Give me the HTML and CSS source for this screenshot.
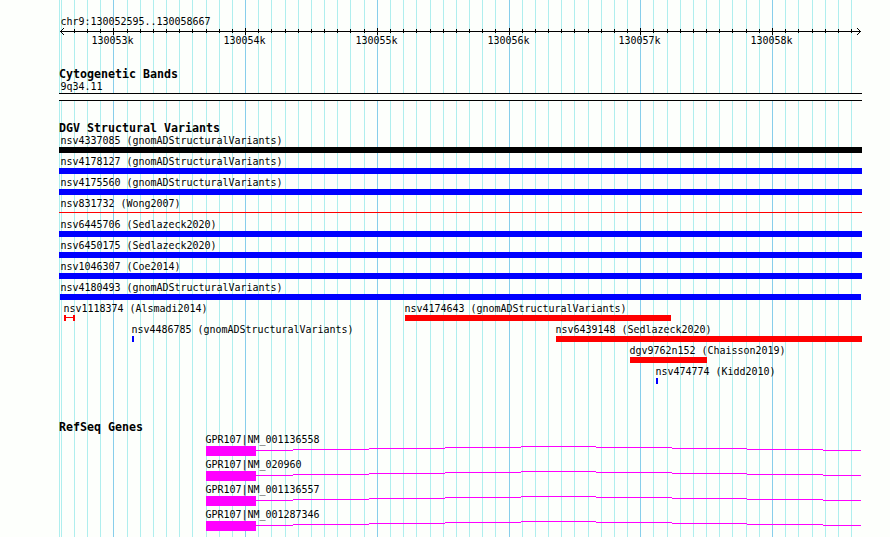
FILE: index.html
```
<!DOCTYPE html>
<html lang="en">
<head>
<meta charset="utf-8">
<title>chr9:130052595..130058667</title>
<link rel="stylesheet" href="styles.css">
</head>
<body>
<main class="browser">
  <svg class="gridlines" width="890" height="537" shape-rendering="crispEdges" aria-hidden="true">
    <path class="minor" d="M59.5 0v537M61.5 0v537M74.5 0v537M87.5 0v537M100.5 0v537M127.5 0v537M140.5 0v537M153.5 0v537M166.5 0v537M179.5 0v537M192.5 0v537M206.5 0v537M219.5 0v537M232.5 0v537M258.5 0v537M271.5 0v537M285.5 0v537M298.5 0v537M311.5 0v537M324.5 0v537M337.5 0v537M350.5 0v537M364.5 0v537M390.5 0v537M403.5 0v537M416.5 0v537M430.5 0v537M443.5 0v537M456.5 0v537M469.5 0v537M482.5 0v537M495.5 0v537M522.5 0v537M535.5 0v537M548.5 0v537M561.5 0v537M574.5 0v537M588.5 0v537M601.5 0v537M614.5 0v537M627.5 0v537M653.5 0v537M667.5 0v537M680.5 0v537M693.5 0v537M706.5 0v537M719.5 0v537M732.5 0v537M746.5 0v537M759.5 0v537M785.5 0v537M798.5 0v537M812.5 0v537M825.5 0v537M838.5 0v537M851.5 0v537"/>
    <path class="major" d="M113.5 0v537M245.5 0v537M377.5 0v537M509.5 0v537M640.5 0v537M772.5 0v537"/>
  </svg>

  <div class="tracks">
    <header class="ruler">
      <div class="line"><span class="label" style="--x:1">chr9:130052595..130058667</span></div>
      <svg class="axis" width="803" height="7" viewBox="59 28 803 7" shape-rendering="crispEdges" aria-hidden="true">
        <path d="M60 31.5H861"/>
        <path d="M74.5 29v4M87.5 29v4M100.5 29v4M127.5 29v4M140.5 29v4M153.5 29v4M166.5 29v4M179.5 29v4M192.5 29v4M206.5 29v4M219.5 29v4M232.5 29v4M258.5 29v4M271.5 29v4M285.5 29v4M298.5 29v4M311.5 29v4M324.5 29v4M337.5 29v4M350.5 29v4M364.5 29v4M390.5 29v4M403.5 29v4M416.5 29v4M430.5 29v4M443.5 29v4M456.5 29v4M469.5 29v4M482.5 29v4M495.5 29v4M522.5 29v4M535.5 29v4M548.5 29v4M561.5 29v4M574.5 29v4M588.5 29v4M601.5 29v4M614.5 29v4M627.5 29v4M653.5 29v4M667.5 29v4M680.5 29v4M693.5 29v4M706.5 29v4M719.5 29v4M732.5 29v4M746.5 29v4M759.5 29v4M785.5 29v4M798.5 29v4M812.5 29v4M825.5 29v4M838.5 29v4M851.5 29v4"/>
        <path d="M113.5 28v7M245.5 28v7M377.5 28v7M509.5 28v7M640.5 28v7M772.5 28v7"/>
        <path d="M61 30.5h1M62 29.5h1M63 28.5h1M61 32.5h1M62 33.5h1M63 34.5h1M859 30.5h1M858 29.5h1M857 28.5h1M859 32.5h1M858 33.5h1M857 34.5h1"/>
      </svg>
      <div class="line">
        <span class="label" style="--x:32">130053k</span>
        <span class="label" style="--x:164">130054k</span>
        <span class="label" style="--x:296">130055k</span>
        <span class="label" style="--x:428">130056k</span>
        <span class="label" style="--x:559">130057k</span>
        <span class="label" style="--x:691">130058k</span>
      </div>
    </header>

    <section class="cytobands">
      <h2>Cytogenetic Bands</h2>
      <div class="line"><span class="label" style="--x:1">9q34.11</span></div>
      <div class="band"></div>
    </section>

    <section class="variants">
      <h2>DGV Structural Variants</h2>
      <div class="row"><span class="label" style="--x:1">nsv4337085 (gnomADStructuralVariants)</span><i class="bar black" style="--x:0;--w:803"></i></div>
      <div class="row"><span class="label" style="--x:1">nsv4178127 (gnomADStructuralVariants)</span><i class="bar blue" style="--x:0;--w:803"></i></div>
      <div class="row"><span class="label" style="--x:1">nsv4175560 (gnomADStructuralVariants)</span><i class="bar blue" style="--x:0;--w:803"></i></div>
      <div class="row"><span class="label" style="--x:1">nsv831732 (Wong2007)</span><i class="bar thin" style="--x:0;--w:803"></i></div>
      <div class="row"><span class="label" style="--x:1">nsv6445706 (Sedlazeck2020)</span><i class="bar blue" style="--x:0;--w:803"></i></div>
      <div class="row"><span class="label" style="--x:1">nsv6450175 (Sedlazeck2020)</span><i class="bar blue" style="--x:0;--w:803"></i></div>
      <div class="row"><span class="label" style="--x:1">nsv1046307 (Coe2014)</span><i class="bar blue" style="--x:0;--w:803"></i></div>
      <div class="row"><span class="label" style="--x:1">nsv4180493 (gnomADStructuralVariants)</span><i class="bar blue" style="--x:1;--w:801"></i></div>
      <div class="row">
        <span class="label" style="--x:4">nsv1118374 (Alsmadi2014)</span><i class="bar span" style="--x:5;--w:11"></i>
        <span class="label" style="--x:345">nsv4174643 (gnomADStructuralVariants)</span><i class="bar red" style="--x:346;--w:266"></i>
      </div>
      <div class="row">
        <span class="label" style="--x:72">nsv4486785 (gnomADStructuralVariants)</span><i class="bar blue" style="--x:73;--w:2"></i>
        <span class="label" style="--x:496">nsv6439148 (Sedlazeck2020)</span><i class="bar red" style="--x:497;--w:306"></i>
      </div>
      <div class="row"><span class="label" style="--x:570">dgv9762n152 (Chaisson2019)</span><i class="bar red" style="--x:571;--w:77"></i></div>
      <div class="row"><span class="label" style="--x:596">nsv474774 (Kidd2010)</span><i class="bar blue" style="--x:597;--w:2"></i></div>
    </section>

    <section class="genes">
      <h2>RefSeq Genes</h2>
      <svg width="0" height="0" class="defs" aria-hidden="true">
        <symbol id="transcript" viewBox="0 0 803 10">
          <path fill="#f0f" d="M147 0h50v10h-50zM197 4h37v1h-37zM234 3h76v1h-76zM310 2h76v1h-76zM386 1h76v1h-76zM462 0h75v1h-75zM537 1h76v1h-76zM613 2h75v1h-75zM688 3h76v1h-76zM764 4h38v1h-38z"/>
        </symbol>
      </svg>
      <div class="gene"><span class="label" style="--x:146">GPR107|NM_001136558</span><svg width="803" height="10" shape-rendering="crispEdges"><use href="#transcript"/></svg></div>
      <div class="gene"><span class="label" style="--x:146">GPR107|NM_020960</span><svg width="803" height="10" shape-rendering="crispEdges"><use href="#transcript"/></svg></div>
      <div class="gene"><span class="label" style="--x:146">GPR107|NM_001136557</span><svg width="803" height="10" shape-rendering="crispEdges"><use href="#transcript"/></svg></div>
      <div class="gene"><span class="label" style="--x:146">GPR107|NM_001287346</span><svg width="803" height="10" shape-rendering="crispEdges"><use href="#transcript"/></svg></div>
    </section>
  </div>
</main>
</body>
</html>
```
FILE: styles.css
```
* { box-sizing: border-box; }

body {
  margin: 0;
  background: #fdfffc;
  color: #000;
  font-family: "DejaVu Sans Mono", "Liberation Mono", monospace;
}

.browser {
  position: relative;
  width: 890px;
  height: 537px;
  overflow: hidden;
}

/* guide lines behind every track */
.gridlines { position: absolute; top: 0; left: 0; }
.gridlines path { fill: none; stroke-width: 1; }
.gridlines .minor { stroke: #afeeee; }
.gridlines .major { stroke: #87ceeb; }

.tracks {
  position: relative;
  width: 803px;
  margin-left: 59px;
  padding-top: 16px;
}

svg { display: block; }

h2 {
  margin: 0 0 1px;
  height: 12px;
  font-size: 11.63px;
  line-height: 12px;
  font-weight: bold;
  white-space: pre;
}

.line, .row, .gene { display: grid; }
.line { height: 12px; }

.label {
  grid-area: 1 / 1;
  justify-self: start;
  height: 12px;
  margin-left: calc(var(--x) * 1px + 0.4px);
  font-size: 10px;
  line-height: 12px;
  letter-spacing: -0.0205px;
  white-space: pre;
  transform: scaleY(1.1);
  transform-origin: 0 9px;
}

.ruler { height: 52px; }
.axis path { fill: none; stroke: #000; stroke-width: 1; }

.cytobands { height: 54px; }
.band {
  height: 8px;
  border: solid #000;
  border-width: 1px 0;
  background: #fdfffc;
}

.variants { height: 299px; }
.row {
  grid-template-rows: 12px 6px;
  height: 21px;
}

.bar {
  grid-area: 2 / 1;
  width: calc(var(--w) * 1px);
  height: 6px;
  margin-left: calc(var(--x) * 1px);
}
.black { background: #000; }
.blue { background: #00f; }
.red { background: #f00; }
.thin { height: 1px; margin-top: 2px; background: #f00; }
.span {
  border: solid #f00;
  border-width: 0 2px;
  background: linear-gradient(#f00, #f00) 0 2px / 100% 1px no-repeat;
}

.genes .defs { position: absolute; }
.gene {
  grid-template-rows: 12px 10px;
  height: 25px;
}
.gene svg { grid-area: 2 / 1; }
```
